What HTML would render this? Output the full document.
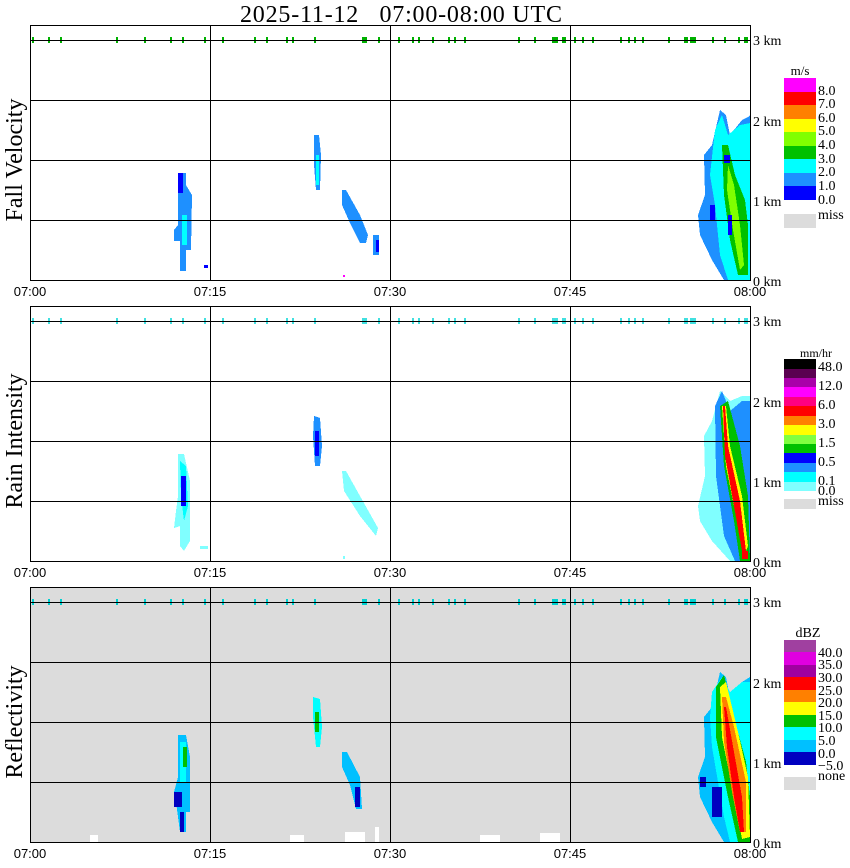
<!DOCTYPE html>
<html><head><meta charset="utf-8"><style>
html,body{margin:0;padding:0;background:#fff;}
svg{display:block}
text{font-family:"Liberation Serif",serif;fill:#000}
.t{font-family:"Liberation Sans",sans-serif;font-size:13px}
.k{font-size:14px}
.lb{font-size:14px}
</style></head><body>
<svg width="850" height="868" viewBox="0 0 850 868" xmlns="http://www.w3.org/2000/svg" shape-rendering="crispEdges">
<text x="240" y="22" font-size="24" textLength="322" style="white-space:pre">2025-11-12   07:00-08:00 UTC</text>

<defs>
<g id="ticks">
<rect x="32" y="-3" width="2" height="6"/><rect x="48" y="-3" width="2" height="6"/><rect x="60" y="-3" width="2" height="6"/>
<rect x="116" y="-3" width="2" height="6"/><rect x="144" y="-3" width="2" height="6"/><rect x="170" y="-3" width="2" height="6"/>
<rect x="182" y="-3" width="2" height="6"/><rect x="204" y="-3" width="2" height="6"/><rect x="222" y="-3" width="2" height="6"/>
<rect x="254" y="-3" width="2" height="6"/><rect x="266" y="-3" width="2" height="6"/><rect x="286" y="-3" width="2" height="6"/>
<rect x="292" y="-3" width="2" height="6"/><rect x="314" y="-3" width="2" height="6"/><rect x="362" y="-3" width="5" height="6"/>
<rect x="378" y="-3" width="2" height="6"/><rect x="398" y="-3" width="2" height="6"/><rect x="412" y="-3" width="2" height="6"/>
<rect x="418" y="-3" width="2" height="6"/><rect x="432" y="-3" width="2" height="6"/><rect x="448" y="-3" width="2" height="6"/>
<rect x="454" y="-3" width="2" height="6"/><rect x="464" y="-3" width="2" height="6"/><rect x="518" y="-3" width="2" height="6"/>
<rect x="534" y="-3" width="2" height="6"/><rect x="552" y="-3" width="6" height="6"/><rect x="562" y="-3" width="4" height="6"/>
<rect x="574" y="-3" width="2" height="6"/><rect x="582" y="-3" width="2" height="6"/><rect x="592" y="-3" width="2" height="6"/>
<rect x="620" y="-3" width="2" height="6"/><rect x="628" y="-3" width="2" height="6"/><rect x="634" y="-3" width="2" height="6"/>
<rect x="642" y="-3" width="2" height="6"/><rect x="668" y="-3" width="2" height="6"/><rect x="684" y="-3" width="4" height="6"/>
<rect x="690" y="-3" width="6" height="6"/><rect x="712" y="-3" width="2" height="6"/><rect x="724" y="-3" width="2" height="6"/>
<rect x="738" y="-3" width="2" height="6"/><rect x="744" y="-3" width="4" height="6"/>
</g>
<g id="frame">
<rect x="30.5" y="0.5" width="720" height="255" fill="none" stroke="#000"/>
<line x1="30" y1="15.5" x2="750" y2="15.5" stroke="#000"/>
<line x1="30" y1="75.5" x2="750" y2="75.5" stroke="#000"/>
<line x1="30" y1="135.5" x2="750" y2="135.5" stroke="#000"/>
<line x1="30" y1="195.5" x2="750" y2="195.5" stroke="#000"/>
<line x1="210.5" y1="0" x2="210.5" y2="256" stroke="#000"/>
<line x1="390.5" y1="0" x2="390.5" y2="256" stroke="#000"/>
<line x1="570.5" y1="0" x2="570.5" y2="256" stroke="#000"/>
<text x="753" y="20" class="k">3 km</text>
<text x="753" y="101" class="k">2 km</text>
<text x="753" y="181" class="k">1 km</text>
<text x="753" y="261" class="k">0 km</text>
<text x="30" y="271" class="t" text-anchor="middle">07:00</text>
<text x="210" y="271" class="t" text-anchor="middle">07:15</text>
<text x="390" y="271" class="t" text-anchor="middle">07:30</text>
<text x="570" y="271" class="t" text-anchor="middle">07:45</text>
<text x="750" y="271" class="t" text-anchor="middle">08:00</text>
</g>
</defs>

<!-- PANEL 1 -->
<g transform="translate(0,25)">
<g fill="#00b000" transform="translate(0,15)"><use href="#ticks"/></g>
<polygon points="178,148 186,148 186,160 192,170 191,225 186,225 186,246 180,246 180,216 174,216 174,205 178,200" fill="#1e90ff"/>
<rect x="178" y="148" width="5" height="20" fill="#0000ff"/>
<rect x="182" y="190" width="5" height="30" fill="#00ffff"/>
<rect x="204" y="240" width="4" height="3" fill="#0000ff"/>
<polygon points="314,110 319,110 321,130 320,165 316,165 314,140" fill="#1e90ff"/>
<rect x="316" y="130" width="3" height="30" fill="#00ffff"/>
<polygon points="342,165 346,165 360,190 368,210 366,218 360,218 350,198 342,180" fill="#1e90ff"/>
<rect x="373" y="210" width="6" height="20" fill="#1e90ff"/>
<rect x="376" y="215" width="3" height="12" fill="#0000ff"/>
<rect x="343" y="250" width="2" height="2" fill="#ff00ff"/>
<polygon points="720,85 726,90 730,110 742,95 748,92 750,90 750,255 724,255 712,235 700,210 698,190 705,170 704,130 712,120" fill="#1e90ff"/>
<polygon points="715,105 722,90 728,110 740,100 750,98 750,255 728,255 720,230 715,180 710,150" fill="#00ffff"/>
<polygon points="722,120 728,120 735,150 745,175 748,200 748,250 738,250 730,215 724,170" fill="#00c000"/>
<polygon points="728,140 734,160 740,200 744,240 740,245 733,205 727,165" fill="#80ff00"/>
<rect x="724" y="130" width="6" height="8" fill="#0000ff"/>
<rect x="710" y="180" width="5" height="15" fill="#0000ff"/>
<rect x="728" y="190" width="4" height="20" fill="#0000ff"/>
<use href="#frame"/>
</g>
<text transform="translate(22,160) rotate(-90)" font-size="24" text-anchor="middle">Fall Velocity</text>
<text x="800" y="75" font-size="13" text-anchor="middle">m/s</text>
<g>
<rect x="784" y="78" width="32" height="14" fill="#ff00ff"/>
<rect x="784" y="92" width="32" height="13" fill="#ff0000"/>
<rect x="784" y="105" width="32" height="14" fill="#ff8000"/>
<rect x="784" y="119" width="32" height="13" fill="#ffff00"/>
<rect x="784" y="132" width="32" height="14" fill="#80ff00"/>
<rect x="784" y="146" width="32" height="13" fill="#00c000"/>
<rect x="784" y="159" width="32" height="14" fill="#00ffff"/>
<rect x="784" y="173" width="32" height="13" fill="#1e90ff"/>
<rect x="784" y="186" width="32" height="14" fill="#0000ff"/>
<rect x="784" y="214" width="32" height="14" fill="#dcdcdc"/>
</g>
<text x="818" y="95" class="lb">8.0</text><text x="818" y="108" class="lb">7.0</text><text x="818" y="122" class="lb">6.0</text><text x="818" y="135" class="lb">5.0</text><text x="818" y="149" class="lb">4.0</text><text x="818" y="163" class="lb">3.0</text><text x="818" y="176" class="lb">2.0</text><text x="818" y="190" class="lb">1.0</text><text x="818" y="204" class="lb">0.0</text><text x="818" y="219" class="lb">miss</text>

<!-- PANEL 2 -->
<g transform="translate(0,306)">
<g fill="#40e0e0" transform="translate(0,15)"><use href="#ticks"/></g>
<polygon points="178,148 184,148 190,175 190,235 184,245 180,240 180,220 174,222 176,205 178,190" fill="#80ffff"/>
<polygon points="180,155 186,160 188,200 184,215 181,190" fill="#00ffff"/>
<rect x="181" y="170" width="5" height="30" fill="#0000ff"/>
<rect x="200" y="240" width="8" height="3" fill="#80ffff"/>
<polygon points="314,110 320,112 322,140 320,160 315,160 313,130" fill="#1e90ff"/>
<rect x="315" y="125" width="4" height="25" fill="#0000ff"/>
<polygon points="342,165 346,165 360,190 378,222 376,230 360,210 344,185" fill="#80ffff"/>
<rect x="343" y="250" width="2" height="3" fill="#80ffff"/>
<polygon points="720,85 730,95 742,90 750,90 750,255 730,255 712,235 700,215 698,200 705,170 704,130 712,115" fill="#80ffff"/>
<polygon points="715,100 722,85 730,105 742,95 750,95 750,255 735,255 724,230 716,170" fill="#1e90ff"/>
<polygon points="720,100 728,95 740,140 748,190 750,255 740,255 734,215 724,160" fill="#00c000"/>
<polygon points="722,100 726,100 730,140 742,190 748,240 744,250 736,210 726,160" fill="#ffff00"/>
<polygon points="723,100 725,100 728,140 740,195 746,245 742,245 734,200 725,150" fill="#ff0000"/>
<rect x="742" y="245" width="6" height="8" fill="#ff0000"/>
<use href="#frame"/>
</g>
<text transform="translate(22,441) rotate(-90)" font-size="24" text-anchor="middle">Rain Intensity</text>
<text x="816" y="357" font-size="12" text-anchor="middle">mm/hr</text>
<g>
<rect x="784" y="359" width="32" height="10" fill="#000000"/>
<rect x="784" y="369" width="32" height="9" fill="#5a0050"/>
<rect x="784" y="378" width="32" height="9" fill="#aa00aa"/>
<rect x="784" y="387" width="32" height="10" fill="#ff00ff"/>
<rect x="784" y="397" width="32" height="9" fill="#ff0080"/>
<rect x="784" y="406" width="32" height="10" fill="#ff0000"/>
<rect x="784" y="416" width="32" height="9" fill="#ff8000"/>
<rect x="784" y="425" width="32" height="10" fill="#ffff00"/>
<rect x="784" y="435" width="32" height="9" fill="#80ff40"/>
<rect x="784" y="444" width="32" height="9" fill="#00c000"/>
<rect x="784" y="453" width="32" height="10" fill="#0000ff"/>
<rect x="784" y="463" width="32" height="9" fill="#1e90ff"/>
<rect x="784" y="472" width="32" height="10" fill="#00ffff"/>
<rect x="784" y="482" width="32" height="9" fill="#80ffff"/>
<rect x="784" y="499" width="32" height="10" fill="#dcdcdc"/>
</g>
<text x="818" y="371" class="lb">48.0</text><text x="818" y="390" class="lb">12.0</text><text x="818" y="409" class="lb">6.0</text><text x="818" y="428" class="lb">3.0</text><text x="818" y="447" class="lb">1.5</text><text x="818" y="466" class="lb">0.5</text><text x="818" y="485" class="lb">0.1</text><text x="818" y="495" class="lb">0.0</text><text x="818" y="505" class="lb">miss</text>

<!-- PANEL 3 -->
<g transform="translate(0,587)">
<rect x="30" y="0" width="720" height="255" fill="#dcdcdc"/>
<rect x="90" y="248" width="8" height="7" fill="#fff"/><rect x="290" y="248" width="14" height="7" fill="#fff"/><rect x="345" y="245" width="20" height="10" fill="#fff"/><rect x="375" y="240" width="4" height="15" fill="#fff"/><rect x="480" y="248" width="20" height="7" fill="#fff"/><rect x="540" y="246" width="20" height="9" fill="#fff"/>
<g fill="#00d0d0" transform="translate(0,15)"><use href="#ticks"/></g>
<polygon points="178,148 186,148 190,170 190,225 186,225 186,245 180,245 176,215 174,205 178,190" fill="#00c0ff"/>
<rect x="180" y="155" width="6" height="40" fill="#00ffff"/>
<rect x="183" y="160" width="4" height="20" fill="#00c000"/>
<rect x="174" y="205" width="8" height="15" fill="#0000c0"/>
<rect x="180" y="225" width="4" height="20" fill="#0000c0"/>
<polygon points="313,110 320,112 322,140 320,160 316,160 313,130" fill="#00ffff"/>
<rect x="315" y="125" width="4" height="20" fill="#00c000"/>
<polygon points="342,165 347,165 360,190 362,222 356,222 350,198 342,180" fill="#00c0ff"/>
<rect x="355" y="200" width="5" height="20" fill="#0000c0"/>
<polygon points="720,85 726,90 730,110 742,95 750,90 750,255 724,255 712,235 700,210 698,190 705,170 704,130 712,120" fill="#00c0ff"/>
<polygon points="712,105 722,90 730,105 742,95 750,95 750,255 730,255 724,230 712,160 710,130" fill="#00ffff"/>
<polygon points="716,100 724,88 734,130 746,175 750,210 750,255 738,255 728,210 716,150" fill="#00c000"/>
<polygon points="720,100 726,95 738,145 748,190 750,250 742,252 734,210 722,150" fill="#ffff00"/>
<polygon points="722,110 726,110 734,140 746,195 746,245 740,245 732,205 724,155" fill="#ff8000"/>
<polygon points="724,120 726,120 734,165 742,210 744,245 740,245 734,210 727,160" fill="#ff0000"/>
<rect x="700" y="190" width="6" height="10" fill="#0000c0"/>
<rect x="712" y="200" width="10" height="30" fill="#0000c0"/>
<use href="#frame"/>
</g>
<text transform="translate(22,722) rotate(-90)" font-size="24" text-anchor="middle">Reflectivity</text>
<text x="808" y="637" font-size="14" text-anchor="middle">dBZ</text>
<g>
<rect x="784" y="640" width="32" height="12" fill="#a040a0"/>
<rect x="784" y="652" width="32" height="13" fill="#e000e0"/>
<rect x="784" y="665" width="32" height="12" fill="#a000a0"/>
<rect x="784" y="677" width="32" height="13" fill="#ff0000"/>
<rect x="784" y="690" width="32" height="12" fill="#ff8000"/>
<rect x="784" y="702" width="32" height="13" fill="#ffff00"/>
<rect x="784" y="715" width="32" height="12" fill="#00c000"/>
<rect x="784" y="727" width="32" height="13" fill="#00ffff"/>
<rect x="784" y="740" width="32" height="12" fill="#00c0ff"/>
<rect x="784" y="752" width="32" height="13" fill="#0000c0"/>
<rect x="784" y="777" width="32" height="13" fill="#dcdcdc"/>
</g>
<text x="818" y="657" class="lb">40.0</text><text x="818" y="669" class="lb">35.0</text><text x="818" y="682" class="lb">30.0</text><text x="818" y="695" class="lb">25.0</text><text x="818" y="707" class="lb">20.0</text><text x="818" y="720" class="lb">15.0</text><text x="818" y="732" class="lb">10.0</text><text x="818" y="745" class="lb">5.0</text><text x="818" y="758" class="lb">0.0</text><text x="818" y="770" class="lb">−5.0</text><text x="818" y="780" class="lb">none</text>
</svg>
</body></html>
